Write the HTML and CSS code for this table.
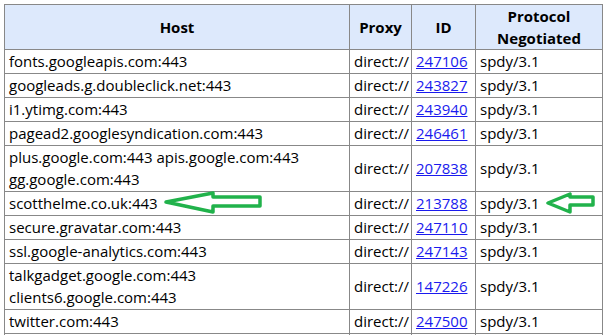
FILE: index.html
```html
<!DOCTYPE html>
<html lang="en">
<head>
  <meta charset="UTF-8">
  <title>SPDY sessions</title>
  <link rel="stylesheet" href="styles.css">
</head>
<body>
  <div class="sessions">
    <table class="session-table">
      <thead>
        <tr>
          <th class="col-host">Host</th>
          <th class="col-proxy">Proxy</th>
          <th class="col-id">ID</th>
          <th class="col-proto">Protocol Negotiated</th>
        </tr>
      </thead>
      <tbody>
        <tr><td>fonts.googleapis.com:443</td><td>direct://</td><td><a href="#">247106</a></td><td>spdy/3.1</td></tr>
        <tr><td>googleads.g.doubleclick.net:443</td><td>direct://</td><td><a href="#">243827</a></td><td>spdy/3.1</td></tr>
        <tr><td>i1.ytimg.com:443</td><td>direct://</td><td><a href="#">243940</a></td><td>spdy/3.1</td></tr>
        <tr><td>pagead2.googlesyndication.com:443</td><td>direct://</td><td><a href="#">246461</a></td><td>spdy/3.1</td></tr>
        <tr><td>plus.google.com:443 apis.google.com:443<br>gg.google.com:443</td><td>direct://</td><td><a href="#">207838</a></td><td>spdy/3.1</td></tr>
        <tr><td>scotthelme.co.uk:443</td><td>direct://</td><td><a href="#">213788</a></td><td>spdy/3.1</td></tr>
        <tr><td>secure.gravatar.com:443</td><td>direct://</td><td><a href="#">247110</a></td><td>spdy/3.1</td></tr>
        <tr><td>ssl.google-analytics.com:443</td><td>direct://</td><td><a href="#">247143</a></td><td>spdy/3.1</td></tr>
        <tr><td>talkgadget.google.com:443<br>clients6.google.com:443</td><td>direct://</td><td><a href="#">147226</a></td><td>spdy/3.1</td></tr>
        <tr><td>twitter.com:443</td><td>direct://</td><td><a href="#">247500</a></td><td>spdy/3.1</td></tr>
        <tr><td>&nbsp;</td><td></td><td></td><td></td></tr>
      </tbody>
    </table>

    <!-- hand-drawn markers over the scotthelme row -->
    <svg class="marker marker-host" width="100" height="24" viewBox="0 0 100 24">
      <polygon points="3,11 50,2 50,6 97,6 97,15 50,15 50,21" />
    </svg>
    <svg class="marker marker-proto" width="52" height="24" viewBox="0 0 52 24">
      <polygon points="3,11 25,2 25,5 48,5 48,13 25,13 25,20" />
    </svg>
  </div>
</body>
</html>
```

FILE: styles.css
```css
* {
  box-sizing: border-box;
}

body {
  margin: 0;
  padding: 4px 0 0 4px;
  background: #ffffff;
  font-family: "Open Sans", "Noto Sans", sans-serif;
  font-size: 15px;
  color: #000000;
  overflow: hidden;
}

.sessions {
  position: relative;
}

.session-table {
  border-collapse: collapse;
  table-layout: fixed;
  width: 598px;
}

.session-table th,
.session-table td {
  border: 1px solid #888888;
  line-height: 22px;
  padding: 0 4px 1px;
  white-space: nowrap;
  overflow: hidden;
}

.session-table th {
  background: #dde9fc;
  font-weight: 700;
  text-align: center;
  white-space: normal;
  padding: 0 3px;
}

.col-host { width: 345px; }
.col-proxy { width: 62px; }
.col-id { width: 64px; }
.col-proto { width: 127px; }

.session-table a {
  color: #1a1aee;
  text-decoration: underline;
}

.marker {
  position: absolute;
}

.marker polygon {
  fill: none;
  stroke: #21b24b;
  stroke-width: 3.5;
  stroke-linejoin: round;
}

.marker-host {
  left: 159px;
  top: 187px;
}

.marker-proto {
  left: 541px;
  top: 188px;
}
```
